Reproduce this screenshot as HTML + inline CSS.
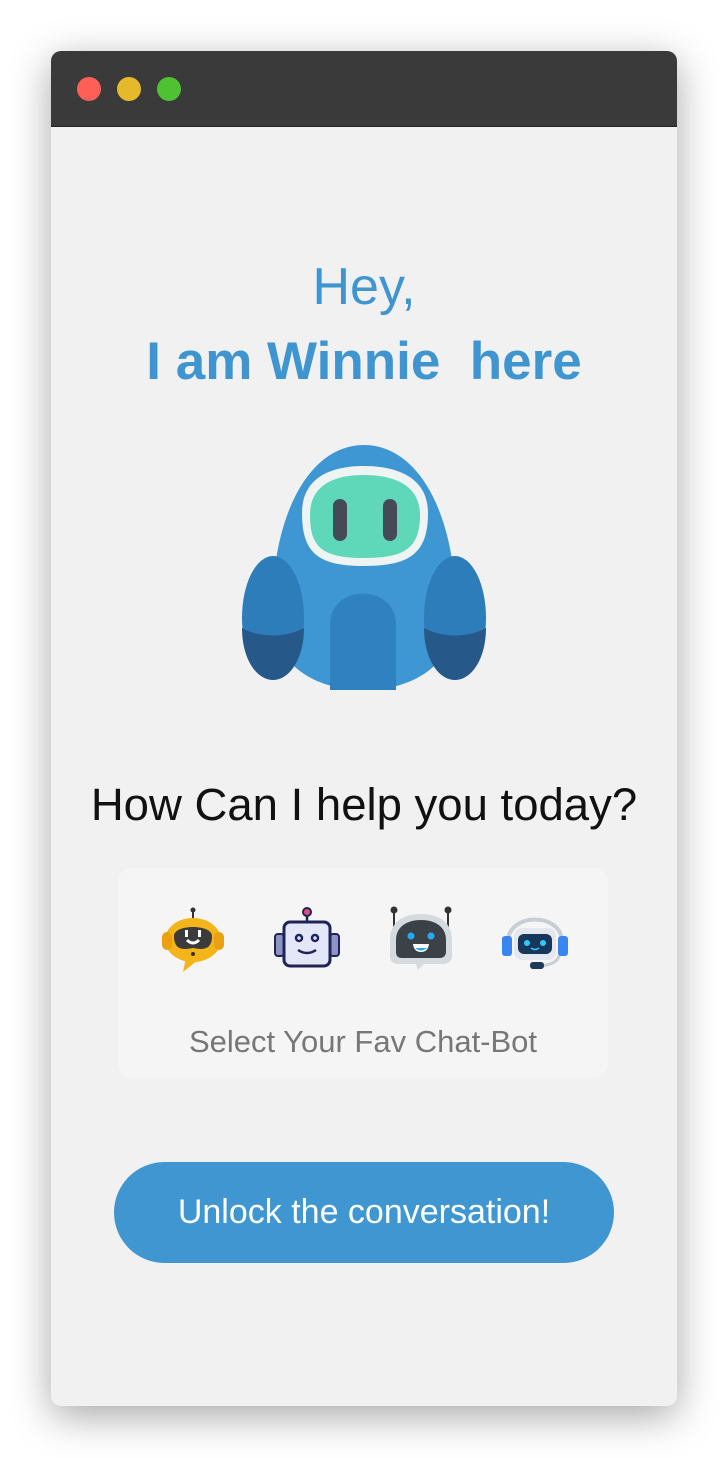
<!DOCTYPE html>
<html><head><style>
body{margin:0;width:728px;height:1458px;background:#fff;position:relative;font-family:"Liberation Sans",sans-serif;overflow:hidden}
.win{position:absolute;left:51px;top:51px;width:626px;height:1355px;border-radius:10px;overflow:hidden;background:#f1f1f1;box-shadow:0 10px 40px rgba(0,0,0,.35)}
.bar{height:75px;background:#3a3a3a;position:relative;border-bottom:1px solid #222}
.dot{position:absolute;top:26px;width:24px;height:24px;border-radius:50%}
.t{position:absolute;left:0;width:626px;text-align:center;color:#3f95cf}
.card{position:absolute;left:67px;top:817px;width:490px;height:210px;background:#f5f5f5;border-radius:14px}
.btn{position:absolute;left:63px;top:1111px;width:500px;height:101px;border-radius:51px;background:#3f96d0;color:#fff;font-size:34px;text-align:center;line-height:101px}
</style></head><body>
<div class="win">
<div class="bar"><div class="dot" style="left:26px;background:#fe5f57"></div><div class="dot" style="left:66px;background:#e6b92b"></div><div class="dot" style="left:106px;background:#4fc234"></div></div>
<div class="t" style="top:206px;font-size:52px">Hey,</div>
<div class="t" style="top:280px;font-size:53px;font-weight:bold">I am Winnie&nbsp; here</div>
<svg style="position:absolute;left:189px;top:392px" width="250" height="250" viewBox="0 0 250 250">
<path d="M32 170 C32 70 70 2 124 2 C178 2 216 70 216 170 C216 220 175 247 124 247 C73 247 32 220 32 170Z" fill="#3e97d3"/>
<path d="M90 247 L90 182 C90 140 156 140 156 182 L156 247Z" fill="#2f82bf"/>
<path d="M62 70 C62 35 90 23 124 23 C158 23 188 35 188 70 C188 110 170 123 124 123 C78 123 62 110 62 70Z" fill="#eef3f4"/>
<path d="M70 72 C70 42 94 32 124 32 C154 32 180 42 180 72 C180 105 165 115 124 115 C83 115 70 105 70 72Z" fill="#5ed8b8"/>
<rect x="93" y="56" width="14" height="42" rx="7" fill="#444a58"/>
<rect x="143" y="56" width="14" height="42" rx="7" fill="#444a58"/>
<ellipse cx="33" cy="175" rx="31" ry="62" fill="#2c7dba"/>
<path d="M2 185 C20 195 45 195 64 185 C64 215 50 237 33 237 C16 237 2 215 2 185Z" fill="#26588a"/>
<ellipse cx="215" cy="175" rx="31" ry="62" fill="#2c7dba"/>
<path d="M184 185 C203 195 228 195 246 185 C246 215 232 237 215 237 C198 237 184 215 184 185Z" fill="#26588a"/>
</svg>
<div style="position:absolute;left:-20px;width:666px;top:728px;text-align:center;font-size:45.5px;color:#111">How Can I help you today?</div>
<div class="card">
<svg style="position:absolute;left:40px;top:38px" width="70" height="70" viewBox="0 0 70 70">
<line x1="35" y1="4" x2="35" y2="14" stroke="#333" stroke-width="2"/><circle cx="35" cy="4" r="2.5" fill="#333"/>
<ellipse cx="35" cy="34" rx="28" ry="22" fill="#f4b41a"/><path d="M28 52 L25 66 L40 54Z" fill="#f4b41a"/>
<rect x="4" y="26" width="10" height="18" rx="5" fill="#e9a10f"/><rect x="56" y="26" width="10" height="18" rx="5" fill="#e9a10f"/>
<path d="M16 30 C16 18 54 18 54 30 C54 44 45 44 35 42 C25 44 16 44 16 30Z" fill="#3b3b3b"/>
<rect x="27" y="24" width="3" height="7" fill="#fff"/><rect x="40" y="24" width="3" height="7" fill="#fff"/><path d="M29 34 Q35 40 41 34" stroke="#fff" stroke-width="3" fill="none"/>
<circle cx="35" cy="48" r="2" fill="#333"/></svg>
<svg style="position:absolute;left:154px;top:38px" width="70" height="70" viewBox="0 0 70 70">
<line x1="35" y1="6" x2="35" y2="16" stroke="#1e2458" stroke-width="2.5"/><circle cx="35" cy="6" r="4" fill="#e0507a" stroke="#1e2458" stroke-width="2"/>
<rect x="3" y="28" width="9" height="22" rx="3" fill="#8e93c4" stroke="#1e2458" stroke-width="2"/><rect x="58" y="28" width="9" height="22" rx="3" fill="#8e93c4" stroke="#1e2458" stroke-width="2"/>
<rect x="12" y="16" width="46" height="44" rx="6" fill="#e3e7f8" stroke="#1e2458" stroke-width="3"/>
<circle cx="27" cy="32" r="3" fill="none" stroke="#1e2458" stroke-width="2.5"/><circle cx="43" cy="32" r="3" fill="none" stroke="#1e2458" stroke-width="2.5"/><path d="M26 44 Q35 50 44 44" stroke="#1e2458" stroke-width="2.5" fill="none"/></svg>
<svg style="position:absolute;left:268px;top:38px" width="70" height="70" viewBox="0 0 70 70">
<line x1="8" y1="6" x2="8" y2="22" stroke="#333" stroke-width="2"/><circle cx="8" cy="4" r="3.5" fill="#333"/>
<line x1="62" y1="6" x2="62" y2="22" stroke="#333" stroke-width="2"/><circle cx="62" cy="4" r="3.5" fill="#333"/>
<path d="M4 34 C4 14 20 8 35 8 C50 8 66 14 66 34 L66 50 C66 55 62 58 57 58 L38 58 L32 64 L30 58 L12 58 C7 58 4 55 4 50Z" fill="#d5dadf"/>
<path d="M10 34 C10 20 22 14 35 14 C48 14 60 20 60 34 L60 46 C60 50 57 52 54 52 L16 52 C12 52 10 50 10 46Z" fill="#3a4248"/>
<circle cx="25" cy="30" r="3.5" fill="#29a9f0"/><circle cx="45" cy="30" r="3.5" fill="#29a9f0"/><path d="M27 38 L43 38 Q42 46 35 46 Q28 46 27 38Z" fill="#fff"/><path d="M29 42 Q35 47 41 42" fill="#29a9f0"/></svg>
<svg style="position:absolute;left:382px;top:38px" width="70" height="70" viewBox="0 0 70 70">
<path d="M8 36 C8 6 62 6 62 36" stroke="#c9ced5" stroke-width="4" fill="none"/>
<path d="M60 44 C60 56 52 58 42 60" stroke="#c9ced5" stroke-width="3" fill="none"/><rect x="30" y="56" width="14" height="7" rx="3" fill="#1e3a5a"/>
<rect x="14" y="22" width="42" height="32" rx="8" fill="#e4e8ee"/>
<rect x="18" y="28" width="34" height="20" rx="6" fill="#16365c"/>
<circle cx="27" cy="37" r="3" fill="#32c9f4"/><circle cx="43" cy="37" r="3" fill="#32c9f4"/><path d="M31 42 Q35 45 39 42" stroke="#32c9f4" stroke-width="1.5" fill="none"/>
<rect x="2" y="30" width="10" height="20" rx="3" fill="#3a86f0"/><rect x="58" y="30" width="10" height="20" rx="3" fill="#3a86f0"/></svg>
<div style="position:absolute;left:0;width:490px;top:156px;text-align:center;font-size:31px;color:#777">Select Your Fav Chat-Bot</div>
</div>
<div class="btn">Unlock the conversation!</div>
</div>
</body></html>
